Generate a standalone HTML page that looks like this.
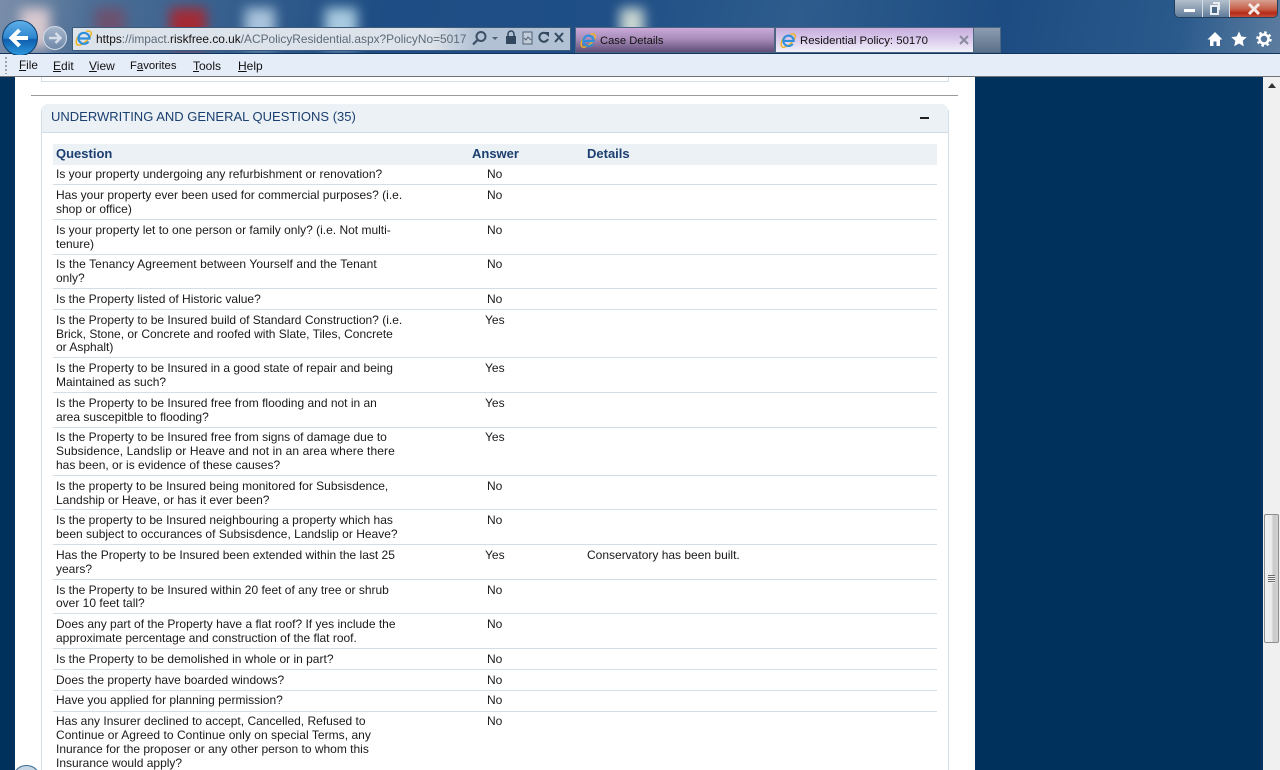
<!DOCTYPE html>
<html><head><meta charset="utf-8"><style>
html,body{margin:0;padding:0;width:1280px;height:770px;overflow:hidden;background:#fff}
body{position:relative;font-family:"Liberation Sans",Arial,sans-serif;font-size:12px;color:#111}
.a{position:absolute}
.t{position:absolute;white-space:nowrap;line-height:14px;font-size:12px;color:#1a1a1a}
.r{position:absolute;left:53px;width:884px;height:1px;background:#d3dfe6}
.h{position:absolute;top:146px;font-weight:bold;font-size:13px;line-height:15px;color:#1c3f70}
.m{position:absolute;top:59px;font-size:12px;line-height:14px;color:#111}
.m u{text-decoration:underline}
.b{position:absolute;filter:blur(6px)}
</style></head><body>
<!-- chrome -->
<div class="a" style="left:0;top:0;width:1280px;height:54px;overflow:hidden;background:linear-gradient(100deg,#7a8ea9 0,#4d6f96 7%,#1d4d84 30%,#1f4f86 48%,#2e5c8d 62%,#1d4c82 78%,#2a5a8c 92%,#5d7d9f 100%)">
<div class="b" style="left:20px;top:8px;width:30px;height:40px;background:#d9c9cf"></div>
<div class="b" style="left:95px;top:8px;width:30px;height:30px;background:#6d5170"></div>
<div class="b" style="left:170px;top:8px;width:36px;height:40px;background:#a42a35"></div>
<div class="b" style="left:245px;top:8px;width:30px;height:40px;background:#a9c4dc"></div>
<div class="b" style="left:325px;top:8px;width:32px;height:40px;background:#a8cbe0"></div>
<div class="b" style="left:620px;top:8px;width:24px;height:34px;background:#c9d6d2"></div>
</div>
<div class="a" style="left:0;top:53px;width:1280px;height:1px;background:#10345f"></div>
<div class="a" style="left:0;top:54px;width:1280px;height:22px;background:#e5edf8"></div>
<div class="a" style="left:0;top:76px;width:1280px;height:1px;background:#6f7377"></div>
<div class="a" style="left:5px;top:57px;width:2px;height:17px;background:repeating-linear-gradient(#9aa2ab 0 2px,transparent 2px 4px)"></div>
<div class="m" style="left:19px;font-size:11.700px"><u>F</u>ile</div>
<div class="m" style="left:53px"><u>E</u>dit</div>
<div class="m" style="left:89px"><u>V</u>iew</div>
<div class="m" style="left:130px;font-size:11.300px">F<u>a</u>vorites</div>
<div class="m" style="left:193px"><u>T</u>ools</div>
<div class="m" style="left:238px"><u>H</u>elp</div>
<!-- nav -->
<svg class="a" style="left:0;top:17px" width="72" height="38" viewBox="0 0 72 38">
<defs><linearGradient id="g" x1="0" y1="0" x2="0" y2="1"><stop offset="0" stop-color="#5fb0e8"/><stop offset=".5" stop-color="#2d86cf"/><stop offset=".55" stop-color="#0f5fae"/><stop offset="1" stop-color="#2f9ae0"/></linearGradient>
<linearGradient id="f" x1="0" y1="0" x2="0" y2="1"><stop offset="0" stop-color="#a6b6cb"/><stop offset="1" stop-color="#6e88a8"/></linearGradient></defs>
<circle cx="55" cy="21" r="11.500" fill="url(#f)" stroke="#d3dce8"/>
<path d="M49 21h11M55.500 16l5 5-5 5" fill="none" stroke="#d6deea" stroke-width="2.500"/>
<circle cx="20" cy="21" r="17.500" fill="url(#g)" stroke="#12406f"/>
<path d="M12 21h16M19.500 13l-8 8 8 8" fill="none" stroke="#fff" stroke-width="4"/>
</svg>
<!-- address -->
<div class="a" style="left:72px;top:27px;width:497px;height:22px;border:1px solid #3d5a7a;background:linear-gradient(90deg,#dde3ea 0,#dde3ea 72%,#b2c2d4 81%,#b2c2d4 100%)"></div>
<svg class="a" style="left:75px;top:29px" width="18" height="18" viewBox="0 0 18 18"><path d="M5 5C1 9 0 15 3 16 6 17 13 12 16 6 17 3 15 1 11 2.500" fill="none" stroke="#eeb422" stroke-width="1.500"/><path d="M3.500 9.500H14.500A5.500 5.500 0 1 0 13.500 12.500" fill="none" stroke="#2f8fdc" stroke-width="2.200"/></svg>
<div class="a" style="left:96px;top:31px;font-size:11.900px;line-height:16px;white-space:nowrap;color:#5c6a78"><span style="color:#111">https</span>://impact.<span style="color:#111">riskfree.co.uk</span>/ACPolicyResidential.aspx?PolicyNo=5017</div>
<svg class="a" style="left:470px;top:29px" width="98" height="18" viewBox="0 0 98 18">
<circle cx="11" cy="7.500" r="4.500" fill="none" stroke="#3d4f66" stroke-width="2"/><path d="M7.500 11L3 15.500" stroke="#3d4f66" stroke-width="2.200"/>
<path d="M22 8h6l-3 3z" fill="#4e6077"/>
<rect x="36" y="7" width="10" height="8" fill="#33475e"/><path d="M38 7V5a3 3 0 0 1 6 0v2" fill="none" stroke="#33475e" stroke-width="1.500"/>
<rect x="53" y="3" width="9" height="12" fill="#c2cdd9" stroke="#4e6077"/><path d="M54 9l2 2 2-3 3 3" fill="none" stroke="#4e6077"/>
<path d="M77 5a4.500 4.500 0 1 0 1 5" fill="none" stroke="#33475e" stroke-width="2"/><path d="M74 3h5v5z" fill="#33475e"/>
<path d="M85 4l8 9M93 4l-8 9" stroke="#33475e" stroke-width="2"/>
</svg>
<!-- tabs -->
<div class="a" style="left:575px;top:27px;width:200px;height:26px;box-sizing:border-box;border:1px solid #4c6582;background:linear-gradient(#c9aad9 0,#a98cb9 45%,#5f4f78 100%)"></div>
<div class="a" style="left:775px;top:27px;width:199px;height:26px;box-sizing:border-box;border:1px solid #4c6582;background:linear-gradient(#c8aedd 0,#d8c8ea 45%,#ece6f6 85%,#f0f4fb 100%)"></div>
<div class="a" style="left:974px;top:27px;width:27px;height:26px;box-sizing:border-box;border:1px solid #4c6582;border-left:0;background:linear-gradient(#8c9cb0,#5a7089)"></div>
<svg class="a" style="left:580px;top:32px" width="17" height="17" viewBox="0 0 18 18"><path d="M5 5C1 9 0 15 3 16 6 17 13 12 16 6 17 3 15 1 11 2.500" fill="none" stroke="#eeb422" stroke-width="1.500"/><path d="M3.500 9.500H14.500A5.500 5.500 0 1 0 13.500 12.500" fill="none" stroke="#2f8fdc" stroke-width="2.200"/></svg>
<svg class="a" style="left:780px;top:32px" width="17" height="17" viewBox="0 0 18 18"><path d="M5 5C1 9 0 15 3 16 6 17 13 12 16 6 17 3 15 1 11 2.500" fill="none" stroke="#eeb422" stroke-width="1.500"/><path d="M3.500 9.500H14.500A5.500 5.500 0 1 0 13.500 12.500" fill="none" stroke="#2f8fdc" stroke-width="2.200"/></svg>
<div class="a" style="left:600px;top:34px;font-size:11.200px;line-height:14px;color:#111">Case Details</div>
<div class="a" style="left:800px;top:34px;font-size:11.400px;line-height:14px;color:#111">Residential Policy: 50170</div>
<svg class="a" style="left:959px;top:35px" width="10" height="10"><path d="M1 1l8 8M9 1l-8 8" stroke="#8b8b9f" stroke-width="2"/></svg>
<!-- window buttons -->
<div class="a" style="left:1174px;top:-2px;width:104px;height:20px;box-sizing:border-box;border:1px solid #24405f;border-radius:0 0 5px 5px;overflow:hidden;background:linear-gradient(#b8c3cf,#8fa1b5 50%,#5f7c9b)">
<div class="a" style="left:27px;top:0;width:1px;height:20px;background:#d6dee7"></div>
<div class="a" style="left:54px;top:0;width:1px;height:20px;background:#d6dee7"></div>
<div class="a" style="left:55px;top:0;width:48px;height:20px;background:linear-gradient(#d9a79a 0,#c8604a 50%,#b52a18 70%,#c8604a 100%)"></div>
<div class="a" style="left:9px;top:10px;width:11px;height:3px;background:#fff"></div>
<div class="a" style="left:35px;top:6px;width:5px;height:6px;border:2px solid #e8edf2;background:#4c6988"></div>
<div class="a" style="left:38px;top:3px;width:5px;height:6px;border-top:2px solid #e8edf2;border-right:2px solid #e8edf2"></div>
<svg class="a" style="left:72px;top:4px" width="14" height="12"><path d="M2 1l10 10M12 1L2 11" stroke="#f4e8e4" stroke-width="3"/></svg>
</div>
<!-- right icons -->
<svg class="a" style="left:1206px;top:30px" width="66" height="18" viewBox="0 0 66 18" fill="#fff">
<path d="M9 2L1.500 9.500H4V16h3.500v-4.500h3V16H14V9.500h2.500z"/>
<path d="M33 1.500l2.300 5 5.400.6-4 3.700 1.100 5.400L33 13.500l-4.800 2.700 1.100-5.400-4-3.700 5.400-.6z"/>
<circle cx="58" cy="9" r="4.500" fill="none" stroke="#fff" stroke-width="2.500"/><circle cx="58" cy="9" r="6.500" fill="none" stroke="#fff" stroke-width="2.500" stroke-dasharray="2.500 2.600"/>
</svg>
<!-- page background -->
<div class="a" style="left:0;top:77px;width:15px;height:693px;background:#00305c"></div>
<div class="a" style="left:975px;top:77px;width:288px;height:693px;background:#00305c"></div>
<div class="a" style="left:1263px;top:77px;width:17px;height:693px;background:#f0f0f0"></div>
<svg class="a" style="left:1268px;top:83px" width="9" height="6"><path d="M0 5h8L4 0z" fill="#333"/></svg>
<div class="a" style="left:1264px;top:514px;width:15px;height:129px;box-sizing:border-box;border:1px solid #8e8f91;border-radius:2px;background:linear-gradient(90deg,#f2f2f2 0,#ebebeb 50%,#c9c9c9 65%,#d2d2d2 100%)"></div>
<div class="a" style="left:1268px;top:575px;width:7px;height:8px;background:repeating-linear-gradient(#6d6d6d 0 1px,#eee 1px 2px)"></div>
<!-- upper panel -->
<div class="a" style="left:41px;top:77px;width:908px;height:5px;box-sizing:border-box;border:1px solid #d3dfe6;border-top:0"></div>
<div class="a" style="left:31px;top:95px;width:927px;height:1px;background:#9a9a9a"></div>
<!-- panel -->
<div class="a" style="left:41px;top:104px;width:907px;height:29px;box-sizing:border-box;background:#ebf1f5;border-bottom:1px solid #cfdde5;border-radius:7px 7px 0 0"></div>
<div class="a" style="left:41px;top:110px;width:1px;height:660px;background:#d3dfe6"></div>
<div class="a" style="left:948px;top:110px;width:1px;height:660px;background:#d3dfe6"></div>
<div class="a" style="left:51px;top:109px;font-size:13px;line-height:16px;white-space:nowrap;color:#1c3f70">UNDERWRITING AND GENERAL QUESTIONS (35)</div>
<div class="a" style="left:920px;top:117px;width:9px;height:2px;background:#222"></div>
<div class="a" style="left:53px;top:144px;width:884px;height:21px;background:#ebf1f5"></div>
<div class="h" style="left:56px">Question</div><div class="h" style="left:472px">Answer</div><div class="h" style="left:587px">Details</div>
<div class="r" style="top:184px"></div><div class="r" style="top:219px"></div><div class="r" style="top:254px"></div><div class="r" style="top:288px"></div><div class="r" style="top:309px"></div><div class="r" style="top:357px"></div><div class="r" style="top:392px"></div><div class="r" style="top:427px"></div><div class="r" style="top:475px"></div><div class="r" style="top:509px"></div><div class="r" style="top:544px"></div><div class="r" style="top:579px"></div><div class="r" style="top:613px"></div><div class="r" style="top:648px"></div><div class="r" style="top:669px"></div><div class="r" style="top:690px"></div><div class="r" style="top:711px"></div>
<div class="t" style="left:56px;top:167px">Is your property undergoing any refurbishment or renovation?</div>
<div class="t" style="left:56px;top:188px">Has your property ever been used for commercial purposes? (i.e.</div>
<div class="t" style="left:56px;top:202px">shop or office)</div>
<div class="t" style="left:56px;top:223px">Is your property let to one person or family only? (i.e. Not multi-</div>
<div class="t" style="left:56px;top:237px">tenure)</div>
<div class="t" style="left:56px;top:257px;letter-spacing:.09px">Is the Tenancy Agreement between Yourself and the Tenant</div>
<div class="t" style="left:56px;top:271px">only?</div>
<div class="t" style="left:56px;top:292px">Is the Property listed of Historic value?</div>
<div class="t" style="left:56px;top:313px">Is the Property to be Insured build of Standard Construction? (i.e.</div>
<div class="t" style="left:56px;top:327px">Brick, Stone, or Concrete and roofed with Slate, Tiles, Concrete</div>
<div class="t" style="left:56px;top:340px">or Asphalt)</div>
<div class="t" style="left:56px;top:361px">Is the Property to be Insured in a good state of repair and being</div>
<div class="t" style="left:56px;top:375px">Maintained as such?</div>
<div class="t" style="left:56px;top:396px">Is the Property to be Insured free from flooding and not in an</div>
<div class="t" style="left:56px;top:410px">area suscepitble to flooding?</div>
<div class="t" style="left:56px;top:430px">Is the Property to be Insured free from signs of damage due to</div>
<div class="t" style="left:56px;top:444px;letter-spacing:.1px">Subsidence, Landslip or Heave and not in an area where there</div>
<div class="t" style="left:56px;top:458px">has been, or is evidence of these causes?</div>
<div class="t" style="left:56px;top:479px">Is the property to be Insured being monitored for Subsisdence,</div>
<div class="t" style="left:56px;top:493px">Landship or Heave, or has it ever been?</div>
<div class="t" style="left:56px;top:513px">Is the property to be Insured neighbouring a property which has</div>
<div class="t" style="left:56px;top:527px">been subject to occurances of Subsisdence, Landslip or Heave?</div>
<div class="t" style="left:56px;top:548px">Has the Property to be Insured been extended within the last 25</div>
<div class="t" style="left:56px;top:562px">years?</div>
<div class="t" style="left:56px;top:583px">Is the Property to be Insured within 20 feet of any tree or shrub</div>
<div class="t" style="left:56px;top:596px">over 10 feet tall?</div>
<div class="t" style="left:56px;top:617px">Does any part of the Property have a flat roof? If yes include the</div>
<div class="t" style="left:56px;top:631px">approximate percentage and construction of the flat roof.</div>
<div class="t" style="left:56px;top:652px">Is the Property to be demolished in whole or in part?</div>
<div class="t" style="left:56px;top:673px">Does the property have boarded windows?</div>
<div class="t" style="left:56px;top:693px">Have you applied for planning permission?</div>
<div class="t" style="left:56px;top:714px">Has any Insurer declined to accept, Cancelled, Refused to</div>
<div class="t" style="left:56px;top:728px;letter-spacing:.04px">Continue or Agreed to Continue only on special Terms, any</div>
<div class="t" style="left:56px;top:742px">Inurance for the proposer or any other person to whom this</div>
<div class="t" style="left:56px;top:756px">Insurance would apply?</div>
<div class="t" style="left:487px;top:167px">No</div><div class="t" style="left:487px;top:188px">No</div><div class="t" style="left:487px;top:223px">No</div><div class="t" style="left:487px;top:257px">No</div><div class="t" style="left:487px;top:292px">No</div>
<div class="t" style="left:485px;top:313px">Yes</div><div class="t" style="left:485px;top:361px">Yes</div><div class="t" style="left:485px;top:396px">Yes</div><div class="t" style="left:485px;top:430px">Yes</div>
<div class="t" style="left:487px;top:479px">No</div><div class="t" style="left:487px;top:513px">No</div>
<div class="t" style="left:485px;top:548px">Yes</div>
<div class="t" style="left:587px;top:548px">Conservatory has been built.</div>
<div class="t" style="left:487px;top:583px">No</div><div class="t" style="left:487px;top:617px">No</div><div class="t" style="left:487px;top:652px">No</div><div class="t" style="left:487px;top:673px">No</div><div class="t" style="left:487px;top:693px">No</div><div class="t" style="left:487px;top:714px">No</div>
<div class="a" style="left:12px;top:765px;width:29px;height:29px;box-sizing:border-box;border:1px solid #3f6d93;border-radius:50%;background:#c7d6e4"></div>
</body></html>
